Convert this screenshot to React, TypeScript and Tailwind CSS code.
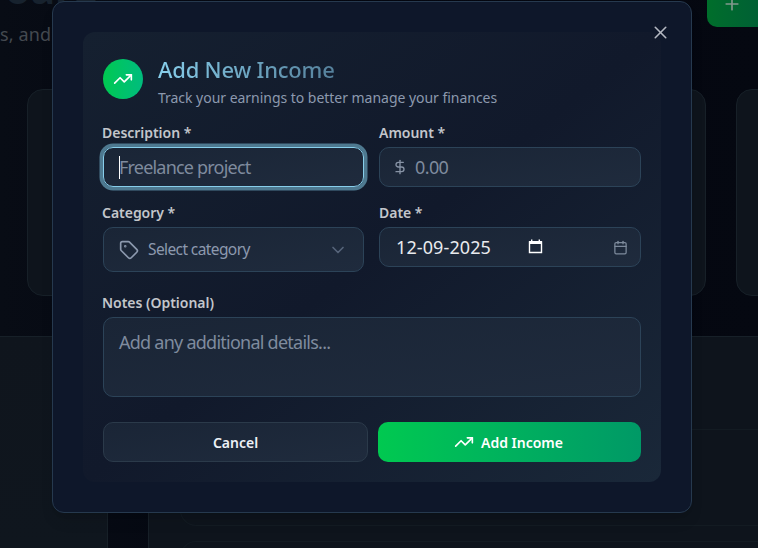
import React from "react";
import { TrendingUp, X, Plus, Tag, ChevronDown, DollarSign, Calendar } from "lucide-react";

const field =
  "flex items-center rounded-[10px] border border-[#2c4358] bg-linear-to-br from-[#1a2536] to-[#1f2b3d]";
const label =
  "relative top-px -ml-px block whitespace-nowrap text-[14px] leading-[20px] font-semibold tracking-[-0.03px] text-[#c3c6cb]";

function Backdrop() {
  return (
    <div className="flex h-[548px] flex-col bg-linear-to-r from-[#080c15] via-[#03060f] to-[#050811]">
      <header className="flex h-[89px] shrink-0 justify-between">
        <div>
          <div className="-mt-[37px] h-[60px] pl-[5px] text-[41px] leading-[50px] font-bold tracking-[-0.1px] text-[#17222e]">
            oard
          </div>
          <p className="text-[18px] leading-[23px] tracking-[0.15px] text-[#444950]">s, and</p>
        </div>
        <div className="flex h-[27px] w-[51px] rounded-bl-[10px] bg-linear-to-r from-[#006e2b] to-[#006034] pl-[15px]">
          <Plus className="-mt-[6px] size-5 text-[#80988c]" />
        </div>
      </header>
      <div className="flex h-[207px] shrink-0 gap-[30px] overflow-hidden pl-[27px]">
        <div className="w-[679px] shrink-0 rounded-2xl border border-[#172028] bg-[#0e141c]" />
        <div className="w-[200px] shrink-0 rounded-2xl border border-[#172028] bg-[#0e141c]" />
      </div>
      <div className="mt-[40px] flex h-[212px] gap-[40px] overflow-hidden">
        <div className="w-[108px] shrink-0 border-t border-r border-[#172028] bg-linear-to-b from-[#0f151d] to-[#0f161e]" />
        <div className="flex grow flex-col gap-[15px] overflow-hidden border-t border-l border-[#172028] bg-[#0e141c] pt-[92px] pl-[31px]">
          <div className="h-[97px] shrink-0 rounded-l-2xl border border-r-0 border-[#131b22]" />
          <div className="h-[97px] shrink-0 rounded-l-2xl border border-r-0 border-[#131b22]" />
        </div>
      </div>
    </div>
  );
}

export default function App() {
  return (
    <div className="relative h-[548px] w-[758px] overflow-hidden font-['Noto_Sans','Open_Sans',sans-serif]">
      <Backdrop />
      <div className="absolute top-[1px] left-[52px] h-[512px] w-[640px] rounded-xl border border-[#26394e] bg-[#0e172a] p-[30px] shadow-lg">
        <X className="absolute top-[20px] right-[20px] size-[21px] text-[#b4b9c2]" strokeWidth={1.8} />
        <div className="h-[450px] w-[578px] rounded-xl bg-linear-to-br from-[#152030] via-[#11192b] to-[#1a2839] px-5 pt-[27px]">
          <div className="flex h-[63px] gap-[15px]">
            <div className="flex size-10 items-center justify-center rounded-full bg-linear-to-r from-[#00c950] to-[#00bc7d]">
              <TrendingUp className="size-5 text-white" />
            </div>
            <div className="-mt-[7px]">
              <h2 className="w-[178px] bg-linear-to-r from-[#87ceeb] to-[#55809b] bg-clip-text text-[22px] leading-[34px] font-medium tracking-[-0.2px] whitespace-nowrap text-transparent">
                Add New Income
              </h2>
              <p className="mt-px text-[14px] leading-[21px] tracking-[-0.03px] whitespace-nowrap text-[#8c99ae]">
                Track your earnings to better manage your finances
              </p>
            </div>
          </div>
          <div className="grid grid-cols-[261px_262px] gap-x-[15px]">
            <div className="h-[80px]">
              <label className={label}>Description *</label>
              <div className="mt-[5px] flex h-10 items-center rounded-[10px] border border-[#87ceeb] bg-linear-to-br from-[#1a2536] to-[#1f2b3d] pl-[15px] text-[18px] tracking-[-0.8px] text-[#7f8b9e] ring-[3.5px] ring-[#4e7990]">
                <span className="h-[23px] w-px bg-white" />
                <span className="-ml-px">Freelance project</span>
              </div>
            </div>
            <div className="h-[80px]">
              <label className={label + " ml-0"}>Amount *</label>
              <div className={field + " mt-[5px] h-10 pl-[12px] text-[18px] tracking-[-0.6px] text-[#7f8b9e]"}>
                <DollarSign className="mr-[7px] size-4 text-[#8793a5]" />
                <span>0.00</span>
              </div>
            </div>
            <div className="h-[90px]">
              <label className={label}>Category *</label>
              <div className={field + " mt-[5px] h-[45px] px-[15px] text-[15.5px] tracking-[-0.6px] text-[#8c99ae]"}>
                <Tag className="mr-[9px] size-5" strokeWidth={2} />
                <span className="grow">Select category</span>
                <ChevronDown className="size-5 text-[#56647a]" />
              </div>
            </div>
            <div className="h-[90px]">
              <label className={label + " ml-0"}>Date *</label>
              <div className={field + " mt-[5px] h-10 pr-[12px] pl-[16px] text-[18px] tracking-[0.1px] text-[#e8eaee]"}>
                <span className="w-[132px]">12-09-2025</span>
                <svg className="mb-[2px] size-[15px]" viewBox="0 0 15 15" fill="none">
                  <path d="M1.5 3h12v10.5h-12z" stroke="white" strokeWidth="1.4" />
                  <path d="M1 2h13v3H1zM3 0.5h1.4V3H3zM10.6 0.5H12V3h-1.4z" fill="white" />
                </svg>
                <Calendar className="ml-auto size-[15px] text-[#7d8a9c]" />
              </div>
            </div>
          </div>
          <label className={label}>Notes (Optional)</label>
          <div className={field + " mt-[5px] h-20 !items-start pt-[11px] pl-[15px] text-[18px] leading-[26px] tracking-[-0.75px] text-[#7f8b9e]"}>
            Add any additional details...
          </div>
          <div className="mt-[25px] flex h-10 gap-[10px] text-[14px] font-semibold">
            <button className="w-[265px] rounded-[10px] border border-[#2b3a4a] bg-linear-to-br from-[#1a2536] to-[#1f2b3d] text-[#edf1f6]">
              Cancel
            </button>
            <button className="flex w-[263px] items-center justify-center gap-[7px] rounded-[10px] bg-linear-to-r from-[#00c950] to-[#009966] pr-[2px] text-white">
              <TrendingUp className="size-5" />
              <span>Add Income</span>
            </button>
          </div>
        </div>
      </div>
    </div>
  );
}
